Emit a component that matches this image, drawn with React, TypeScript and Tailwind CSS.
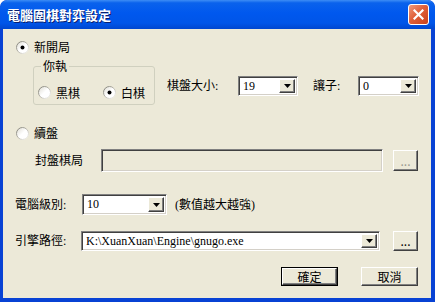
import React from "react";

const ui = '"Liberation Serif", "Noto Sans CJK TC", serif';
const cjk = '"Noto Sans CJK TC", "Liberation Sans", sans-serif';

function Radio({ checked, label, className = "" }: { checked?: boolean; label: string; className?: string }) {
  return (
    <div className={`flex items-center ${className}`}>
      <svg width="13" height="13" viewBox="0 0 13 13" className="shrink-0">
        <defs>
          <linearGradient id="rb" x1="0" y1="0" x2="1" y2="1">
            <stop offset="0" stopColor="#7a7a72" />
            <stop offset="0.5" stopColor="#b8b6ac" />
            <stop offset="1" stopColor="#ffffff" />
          </linearGradient>
          <linearGradient id="rf" x1="0" y1="0" x2="1" y2="1">
            <stop offset="0" stopColor="#dcdad0" />
            <stop offset="0.5" stopColor="#ffffff" />
            <stop offset="1" stopColor="#ffffff" />
          </linearGradient>
        </defs>
        <circle cx="6.5" cy="6.5" r="6" fill="url(#rf)" stroke="url(#rb)" strokeWidth="1" />
        {checked && <circle cx="6.5" cy="6.5" r="2" fill="#000" />}
      </svg>
      <span className="ml-[5px] text-[12px] leading-none text-black" style={{ fontFamily: cjk }}>
        {label}
      </span>
    </div>
  );
}

function DropButton() {
  return (
    <div className="flex h-full w-[16px] shrink-0 items-center justify-center border border-t-white border-l-white border-b-[#404040] border-r-[#404040] bg-[#ECE9D8] shadow-[inset_-1px_-1px_0_#808080]">
      <svg width="7" height="4" viewBox="0 0 7 4">
        <path d="M0 0h7L3.5 4z" fill="#000" />
      </svg>
    </div>
  );
}

function Combo({ value, w }: { value: string; w: string }) {
  return (
    <div
      className={`${w} flex h-full border border-t-[#808080] border-l-[#808080] border-b-white border-r-white bg-white shadow-[inset_1px_1px_0_#404040,inset_-1px_-1px_0_#D4D0C8] p-[2px]`}
    >
      <span className="flex-1 truncate pl-[2px] text-[12px] leading-[15px] text-black" style={{ fontFamily: ui }}>
        {value}
      </span>
      <DropButton />
    </div>
  );
}

function Raised({ children, def, dim, className = "" }: { children: React.ReactNode; def?: boolean; dim?: boolean; className?: string }) {
  return (
    <div className={`${def ? "border border-black" : ""} ${className} flex`}>
      <div
        className={`flex flex-1 items-center justify-center border border-t-white border-l-white border-b-[#404040] border-r-[#404040] bg-[#ECE9D8] shadow-[inset_-1px_-1px_0_#808080] text-[12px] leading-none ${dim ? "text-[#9a9a90]" : "text-black"}`}
        style={{ fontFamily: cjk }}
      >
        {children}
      </div>
    </div>
  );
}

function Label({ text, className = "" }: { text: string; className?: string }) {
  return (
    <span className={`text-[12px] leading-none text-black ${className}`} style={{ fontFamily: ui }}>
      {text}
    </span>
  );
}

export default function App() {
  return (
    <div className="flex h-[302px] w-[435px] flex-col overflow-hidden rounded-t-[7px] bg-[#0842D4]">
      {/* title bar */}
      <div className="flex h-[29px] shrink-0 items-center rounded-t-[7px] bg-[linear-gradient(to_bottom,#3D8DF5_0%,#0A62EC_10%,#0058EE_45%,#0055E8_80%,#0046CF_100%)] pl-[7px] pr-[6px]">
        <span
          className="text-[13px] font-bold leading-none text-white [text-shadow:1px_1px_0_#0A1F6E]"
          style={{ fontFamily: cjk }}
        >
          電腦圍棋對弈設定
        </span>
        <div className="ml-auto flex h-[21px] w-[21px] items-center justify-center rounded-[3px] border border-white bg-[linear-gradient(135deg,#EE9A7C_0%,#E0603A_45%,#C8401C_100%)]">
          <svg width="11" height="11" viewBox="0 0 11 11">
            <path d="M1.5 1.5l8 8M9.5 1.5l-8 8" stroke="#fff" strokeWidth="2.2" strokeLinecap="square" />
          </svg>
        </div>
      </div>

      {/* body */}
      <div className="mb-[4px] ml-[3px] mr-[4px] flex flex-1 flex-col bg-[#ECE9D8]">
        <Radio checked label="新開局" className="ml-[13px] mt-[11px] h-[14px]" />

        <div className="mt-[8px] flex h-[43px]">
          <div className="relative ml-[30px] mt-[4px] h-[39px] w-[122px] rounded-[3px] border border-[#D0D0BF]">
            <span
              className="absolute left-[7px] top-[-8px] bg-[#ECE9D8] px-[2px] text-[12px] leading-[14px] text-black"
              style={{ fontFamily: cjk }}
            >
              你執
            </span>
            <div className="mt-[19px] flex items-center">
              <Radio label="黑棋" className="ml-[4px] h-[13px]" />
              <Radio checked label="白棋" className="ml-[23px] h-[13px]" />
            </div>
          </div>
          <div className="ml-[12px] mt-[14px] flex h-[20px] items-center">
            <Label text="棋盤大小:" className="w-[71px]" />
            <Combo value="19" w="w-[60px]" />
            <Label text="讓子:" className="ml-[15px] w-[45px]" />
            <Combo value="0" w="w-[61px]" />
          </div>
        </div>

        <Radio label="續盤" className="ml-[13px] mt-[21px] h-[14px]" />

        <div className="mt-[9px] flex h-[23px] items-center">
          <Label text="封盤棋局" className="ml-[32px] w-[66px]" />
          <div className="h-full w-[282px] border border-t-[#808080] border-l-[#808080] border-b-white border-r-white bg-[#ECE9D8] shadow-[inset_1px_1px_0_#404040,inset_-1px_-1px_0_#D4D0C8]" />
          <Raised dim className="ml-[10px] h-[21px] w-[25px]">
            ...
          </Raised>
        </div>

        <div className="mt-[22px] flex h-[21px] items-center">
          <Label text="電腦級別:" className="ml-[12px] w-[67px]" />
          <Combo value="10" w="w-[85px]" />
          <Label text="(數值越大越強)" className="ml-[8px]" />
        </div>

        <div className="mt-[16px] flex h-[20px] items-center">
          <Label text="引擎路徑:" className="ml-[12px] w-[66px]" />
          <Combo value="K:\XuanXuan\Engine\gnugo.exe" w="w-[299px]" />
          <Raised className="ml-[13px] h-[20px] w-[25px]">...</Raised>
        </div>

        <div className="mt-[16px] flex h-[19px] justify-end pr-[13px]">
          <Raised def className="w-[57px]">
            確定
          </Raised>
          <Raised className="ml-[23px] w-[57px]">取消</Raised>
        </div>
      </div>
    </div>
  );
}
